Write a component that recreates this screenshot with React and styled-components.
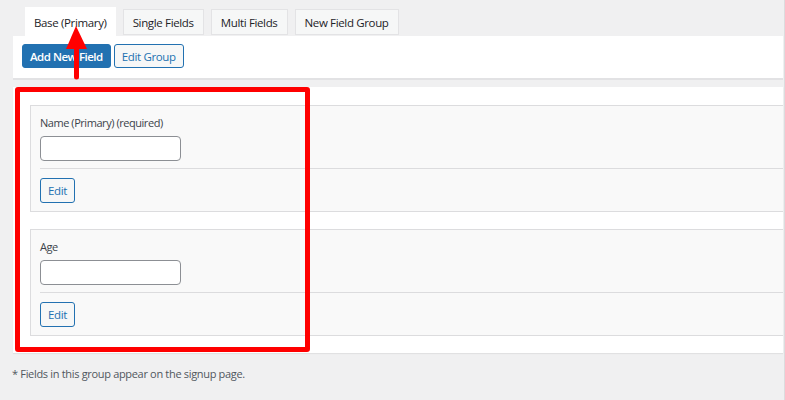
import React from 'react';
import styled, { createGlobalStyle } from 'styled-components';

const GlobalStyle = createGlobalStyle`
  html, body {
    margin: 0;
    padding: 0;
    background: #f0f0f1;
  }
  body {
    font-family: 'Open Sans', 'Noto Sans', sans-serif;
    color: #1d2327;
    letter-spacing: -0.35px;
  }
`;

const Screen = styled.div`
  position: relative;
  width: 785px;
  height: 400px;
  box-sizing: border-box;
  padding: 7px 1px 0 13px;
  border-right: 1px solid #dcdcde;
  overflow: hidden;
`;

const TabRow = styled.div`
  display: flex;
  align-items: flex-end;
  gap: 7px;
  padding-left: 12px;
  height: 29px;
`;

const Tab = styled.div`
  box-sizing: border-box;
  height: ${(props) => (props.$active ? '29px' : '26px')};
  padding: 0 ${(props) => (props.$active ? '8px' : '9px')};
  display: flex;
  align-items: center;
  font-size: 11.5px;
  color: #1d2327;
  background: ${(props) => (props.$active ? '#fff' : '#f6f7f7')};
  border: 1px solid ${(props) => (props.$active ? '#fff' : '#e3e3e5')};
  border-bottom: ${(props) => (props.$active ? 'none' : '1px solid #e3e3e5')};
  margin-bottom: ${(props) => (props.$active ? '0' : '1px')};
`;

const Toolbar = styled.div`
  display: flex;
  gap: 3px;
  height: 42px;
  box-sizing: border-box;
  padding: 8px 9px;
  background: #fff;
  box-shadow: 0 2px 0 #e2e2e4;
`;

const Button = styled.button`
  box-sizing: border-box;
  height: 24px;
  padding: 0 7px;
  font-family: inherit;
  font-size: 11.5px;
  letter-spacing: ${(props) => (props.$primary ? '-0.5px' : '-0.35px')};
  font-weight: ${(props) => (props.$primary ? 600 : 400)};
  border-radius: 3px;
  border: 1px solid #2271b1;
  background: ${(props) => (props.$primary ? '#2271b1' : '#f6f7f7')};
  color: ${(props) => (props.$primary ? '#fff' : '#2271b1')};
  cursor: pointer;
`;

const Panel = styled.div`
  margin-top: 9px;
  background: #fff;
  padding: 18px 0 17px 17px;
  display: flex;
  flex-direction: column;
  gap: 17px;
  box-shadow: 0 1px 1px rgba(0, 0, 0, 0.06);
`;

const FieldCard = styled.div`
  background: #f9f9f9;
  border: 1px solid #dcdcde;
  border-right: none;
`;

const FieldBody = styled.div`
  margin-left: 9px;
  padding: 9px 0 7px;
  border-bottom: 1px solid #dcdcde;
  display: flex;
  flex-direction: column;
  gap: 5px;
`;

const FieldLabel = styled.label`
  font-size: 11px;
  line-height: 16px;
  color: #3c434a;
  letter-spacing: -0.45px;
`;

const TextInput = styled.input`
  box-sizing: border-box;
  width: 141px;
  height: 25px;
  border: 1px solid #8c8f94;
  border-radius: 4px;
  background: #fff;
`;

const FieldActions = styled.div`
  padding: 9px 0 8px 9px;
`;

const EditButton = styled(Button)`
  height: 25px;
  padding: 0 7px;
`;

const Note = styled.p`
  margin: 13px 0 0 -1px;
  font-size: 11px;
  letter-spacing: -0.32px;
  color: #50575e;
`;

const Highlight = styled.div`
  position: absolute;
  left: 15px;
  top: 87px;
  width: 295px;
  height: 265px;
  box-sizing: border-box;
  border: 5px solid #ff0000;
  border-radius: 3px;
  pointer-events: none;
`;

const Arrow = styled.svg`
  position: absolute;
  left: 64px;
  top: 25px;
  pointer-events: none;
`;

export default function App() {
  const tabs = ['Base (Primary)', 'Single Fields', 'Multi Fields', 'New Field Group'];
  const fields = ['Name (Primary) (required)', 'Age'];

  return (
    <>
      <GlobalStyle />
      <Screen>
        <TabRow>
          {tabs.map((tab, idx) => (
            <Tab key={tab} $active={idx === 0}>
              {tab}
            </Tab>
          ))}
        </TabRow>
        <Toolbar>
          <Button $primary>Add New Field</Button>
          <Button>Edit Group</Button>
        </Toolbar>
        <Panel>
          {fields.map((field) => (
            <FieldCard key={field}>
              <FieldBody>
                <FieldLabel>{field}</FieldLabel>
                <TextInput type="text" />
              </FieldBody>
              <FieldActions>
                <EditButton>Edit</EditButton>
              </FieldActions>
            </FieldCard>
          ))}
        </Panel>
        <Note>* Fields in this group appear on the signup page.</Note>
        <Highlight />
        <Arrow width="26" height="56" viewBox="0 0 26 56">
          <polygon points="12,1 2,24 23,24" fill="#ff0000" />
          <line x1="12.5" y1="22" x2="12.5" y2="52" stroke="#ff0000" strokeWidth="5" strokeLinecap="round" />
        </Arrow>
      </Screen>
    </>
  );
}
